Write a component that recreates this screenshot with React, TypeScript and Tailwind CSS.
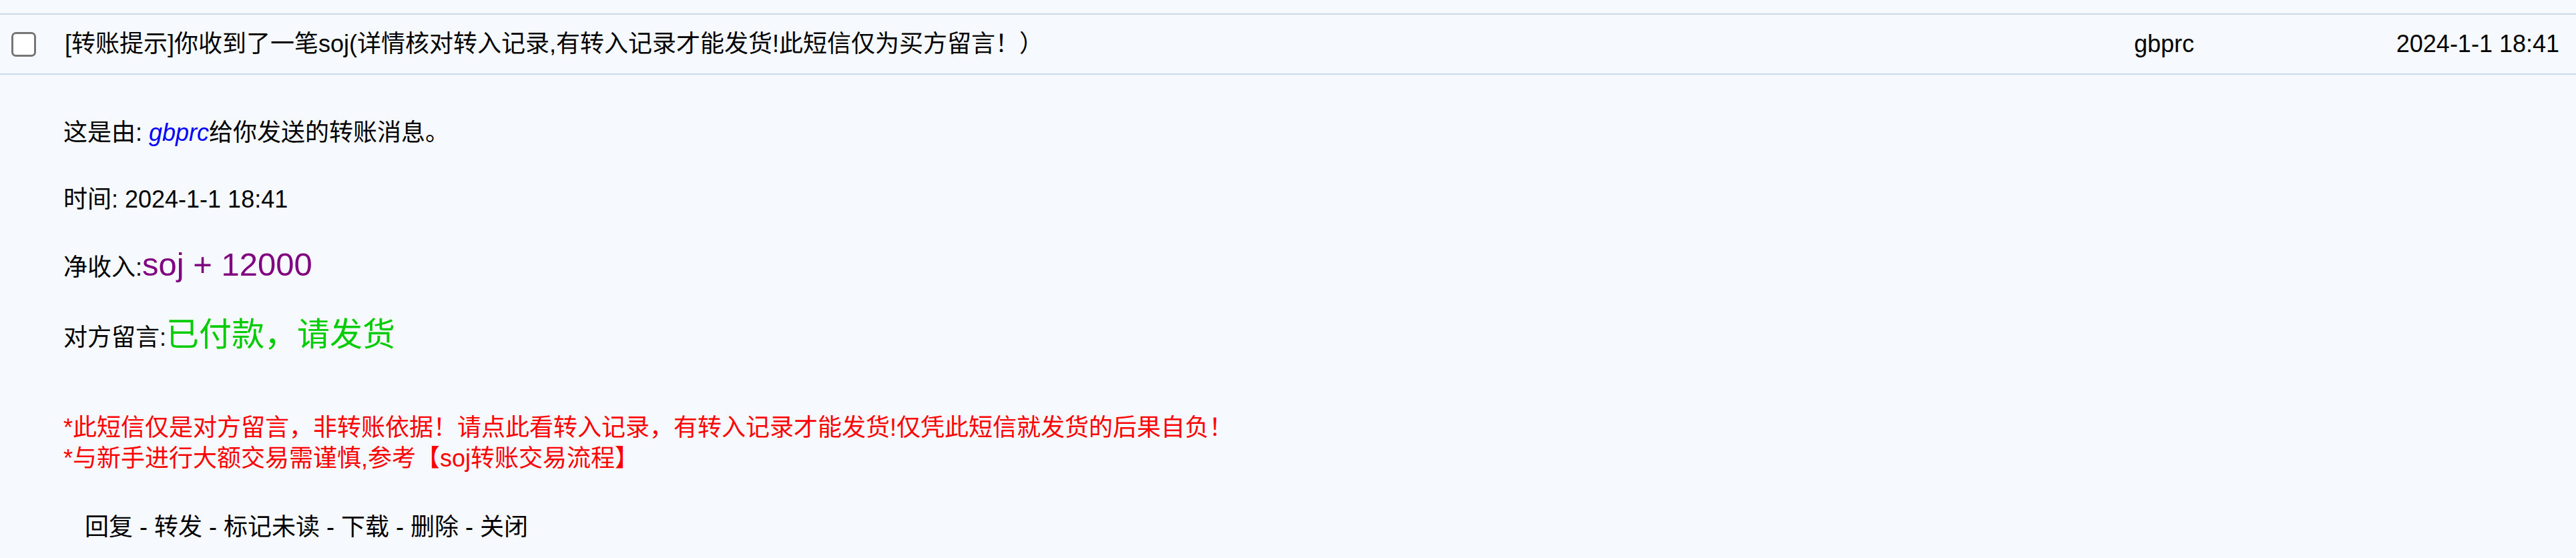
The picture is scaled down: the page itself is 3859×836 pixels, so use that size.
import React from "react";

const font = {
  fontFamily: '"Liberation Sans", "Noto Sans CJK SC", sans-serif',
};

export default function App() {
  const actions = ["回复", "转发", "标记未读", "下载", "删除", "关闭"];

  return (
    <div
      className="w-[3859px] h-[836px] bg-[#f6f9fe] text-black text-[36px] overflow-hidden"
      style={font}
    >
      {/* message row */}
      <div className="mt-[20px] h-[92px] flex items-center border-y-2 border-[#cbd9e8] whitespace-nowrap">
        <div className="w-[97px] flex items-center pl-[17px]">
          <span className="w-[37px] h-[37px] rounded-[7px] border-[3px] border-[#767676] bg-white" />
        </div>
        <div className="flex-1 leading-none">
          [转账提示]你收到了一笔soj(详情核对转入记录,有转入记录才能发货!此短信仅为买方留言！）
        </div>
        <div className="w-[387px] leading-none">gbprc</div>
        <div className="w-[275px] leading-none pr-[25px] text-right">
          2024-1-1 18:41
        </div>
      </div>

      {/* message body */}
      <div className="pl-[95px]">
        <p className="mt-[64px] leading-[45px]">
          这是由: <span className="italic text-[#0000ff]">gbprc</span>
          给你发送的转账消息。
        </p>
        <p className="mt-[55px] leading-[45px]">时间: 2024-1-1 18:41</p>
        <p className="mt-[50px] leading-[50px]">
          净收入:<span className="text-[49px] text-[#800080]">soj + 12000</span>
        </p>
        <p className="mt-[48px] leading-[55px]">
          对方留言:<span className="text-[49px] text-[#00cc00]">已付款，请发货</span>
        </p>
        <div className="mt-[85px] text-[#ff0000] leading-[46px]">
          <p>
            *此短信仅是对方留言，非转账依据！请点此看转入记录，有转入记录才能发货!仅凭此短信就发货的后果自负！
          </p>
          <p>*与新手进行大额交易需谨慎,参考【soj转账交易流程】</p>
        </div>
        <p className="mt-[57px] pl-[32px] leading-[45px]">
          {actions.map((a, i) => (
            <span key={a}>
              {i > 0 && " - "}
              {a}
            </span>
          ))}
        </p>
      </div>
    </div>
  );
}
